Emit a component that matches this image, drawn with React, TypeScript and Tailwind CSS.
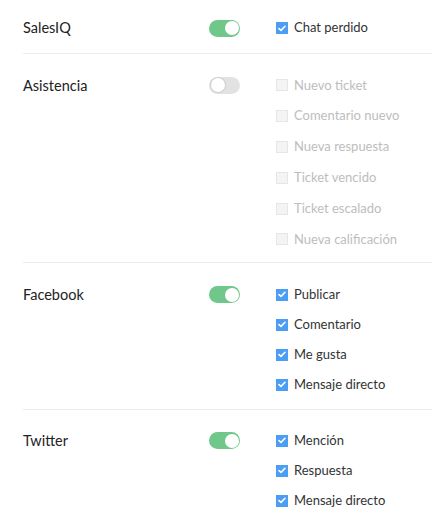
import React from "react";

type Section = {
  title: string;
  on: boolean;
  items: string[];
  rowH: string;
  pad: string;
};

const sections: Section[] = [
  { title: "SalesIQ", on: true, items: ["Chat perdido"], rowH: "h-[30px]", pad: "pt-[13px] pb-[10px]" },
  {
    title: "Asistencia",
    on: false,
    items: ["Nuevo ticket", "Comentario nuevo", "Nueva respuesta", "Ticket vencido", "Ticket escalado", "Nueva calificación"],
    rowH: "h-[30.8px]",
    pad: "pt-[16px] pb-[7px]",
  },
  { title: "Facebook", on: true, items: ["Publicar", "Comentario", "Me gusta", "Mensaje directo"], rowH: "h-[30px]", pad: "pt-[17px] pb-[9px]" },
  { title: "Twitter", on: true, items: ["Mención", "Respuesta", "Mensaje directo"], rowH: "h-[30px]", pad: "pt-[16px] pb-[10px]" },
];

function Toggle({ on }: { on: boolean }) {
  return (
    <div
      className={`w-[31px] h-[17px] rounded-full flex items-center px-[1.5px] ${
        on ? "bg-[#6fc889] justify-end" : "bg-[#e2e2e2] justify-start"
      }`}
    >
      <div className={`w-[14px] h-[14px] rounded-full bg-white ${on ? "" : "shadow-[0_0_0_1px_#cfcfcf]"}`} />
    </div>
  );
}

function Check({ on }: { on: boolean }) {
  if (!on) {
    return <div className="w-[12px] h-[12px] bg-[#f4f4f4] border border-[#e6e6e6]" />;
  }
  return (
    <div className="w-[12px] h-[12px] bg-[#4b9ef3] flex items-center justify-center">
      <svg width="8" height="7" viewBox="0 0 8 7" fill="none">
        <path d="M1 3.6 L3 5.4 L7 1.3" stroke="white" strokeWidth="1.6" strokeLinecap="round" strokeLinejoin="round" />
      </svg>
    </div>
  );
}

export default function App() {
  return (
    <div className="w-[432px] h-[523px] bg-white overflow-hidden font-['Lato','Liberation_Sans',sans-serif]">
      {sections.map((s, i) => (
        <div key={s.title} className={`ml-[23px] flex ${s.pad} ${i < sections.length - 1 ? "border-b border-[#ececec]" : ""}`}>
          <div className={`w-[186px] ${s.rowH} flex items-center text-[14.5px] text-[#222]`}>{s.title}</div>
          <div className={`w-[67px] ${s.rowH} flex items-center`}>
            <Toggle on={s.on} />
          </div>
          <div className="flex flex-col">
            {s.items.map((it) => (
              <div key={it} className={`${s.rowH} flex items-center gap-[6px]`}>
                <Check on={s.on} />
                <span className={`text-[13px] ${s.on ? "text-[#333]" : "text-[#bdbdbd]"}`}>{it}</span>
              </div>
            ))}
          </div>
        </div>
      ))}
    </div>
  );
}
